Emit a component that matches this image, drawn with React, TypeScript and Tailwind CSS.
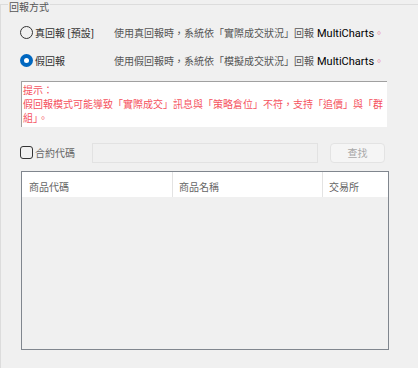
const cjk = "font-['Noto_Sans_CJK_TC','Noto_Sans_CJK_SC',sans-serif]";

const Radio = ({ checked }: { checked?: boolean }) =>
    checked ? (
        <span className="flex h-[13px] w-[13px] items-center justify-center rounded-full bg-[#0067c0]">
            <span className="h-[5px] w-[5px] rounded-full bg-white" />
        </span>
    ) : (
        <span className="h-[13px] w-[13px] rounded-full border border-[#333]" />
    );

const ModeRow = ({ checked, label, desc }: { checked?: boolean; label: React.ReactNode; desc: string }) => (
    <div className="flex h-[17px] items-center">
        <Radio checked={checked} />
        <span className="ml-[2px] w-[79px] text-[10px] leading-[17px] text-[#333]">{label}</span>
        <span className="whitespace-nowrap text-[10px] leading-[17px] text-[#555]">
            {desc}
            <span className="ml-[3px] font-['Roboto',sans-serif] text-[11px] text-black">MultiCharts</span>
            <span className="text-[#e57a9a]">。</span>
        </span>
    </div>
);

const App = () => {
    return (
        <div className={`h-[368px] w-[418px] overflow-hidden bg-[#f0f0f0] ${cjk}`}>
            {/* group legend */}
            <div className="flex h-[13px]">
                <div className="mt-[4px] w-[8px] border-l border-t border-[#dcdcdc]" />
                <span className="px-[1px] text-[10px] leading-[13px] text-[#555]">回報方式</span>
                <div className="mt-[4px] flex-1 border-t border-[#dcdcdc]" />
            </div>

            <div className="h-[355px] border-l border-[#dcdcdc] pl-[19px]">
                <div className="flex flex-col gap-[11px] pt-[11px]">
                    <ModeRow
                        label={<>真回報 <span className="text-black">[</span>預設<span className="text-black">]</span></>}
                        desc="使用真回報時，系統依「實際成交狀況」回報"
                    />
                    <ModeRow checked label="假回報" desc="使用假回報時，系統依「模擬成交狀況」回報" />
                </div>

                {/* hint */}
                <div className="ml-[1px] mt-[12px] h-[46px] w-[366px] border-l border-t border-[#a0a0a0] bg-white pl-[1px] pt-[1px] text-[10px] leading-[14px] text-[#f5525e]">
                    <div>提示：</div>
                    <div className="whitespace-nowrap">假回報模式可能導致「實際成交」訊息與「策略倉位」不符，支持「追價」與「群</div>
                    <div>組」。</div>
                </div>

                {/* search row */}
                <div className="mt-[15px] flex h-[21px] items-center">
                    <span className="h-[13px] w-[13px] rounded-[3px] border border-[#333]" />
                    <span className="ml-[2px] w-[57px] text-[10px] text-[#666]">合約代碼</span>
                    <div className="h-[20px] w-[226px] border border-[#e2e2e2] bg-[#f0f0f0]" />
                    <button className="ml-[12px] h-[20px] w-[55px] rounded-[4px] border border-[#e3e3e3] bg-[#f5f5f5] text-[10px] text-[#a8a8a8]">
                        查找
                    </button>
                </div>

                {/* table */}
                <div className="ml-[1px] mt-[8px] flex h-[179px] w-[368px] flex-col border border-[#80868e]">
                    <div className="flex h-[25px] bg-white text-[10px] leading-[25px] text-[#666]">
                        <div className="w-[151px] border-r border-[#e3e3e3] pl-[7px] pt-[2px]">商品代碼</div>
                        <div className="w-[150px] border-r border-[#e3e3e3] pl-[6px] pt-[2px]">商品名稱</div>
                        <div className="flex-1 pl-[6px] pt-[2px]">交易所</div>
                    </div>
                    <div className="flex-1 bg-[#f0f0f0]" />
                </div>
            </div>
        </div>
    );
};

export default App;
